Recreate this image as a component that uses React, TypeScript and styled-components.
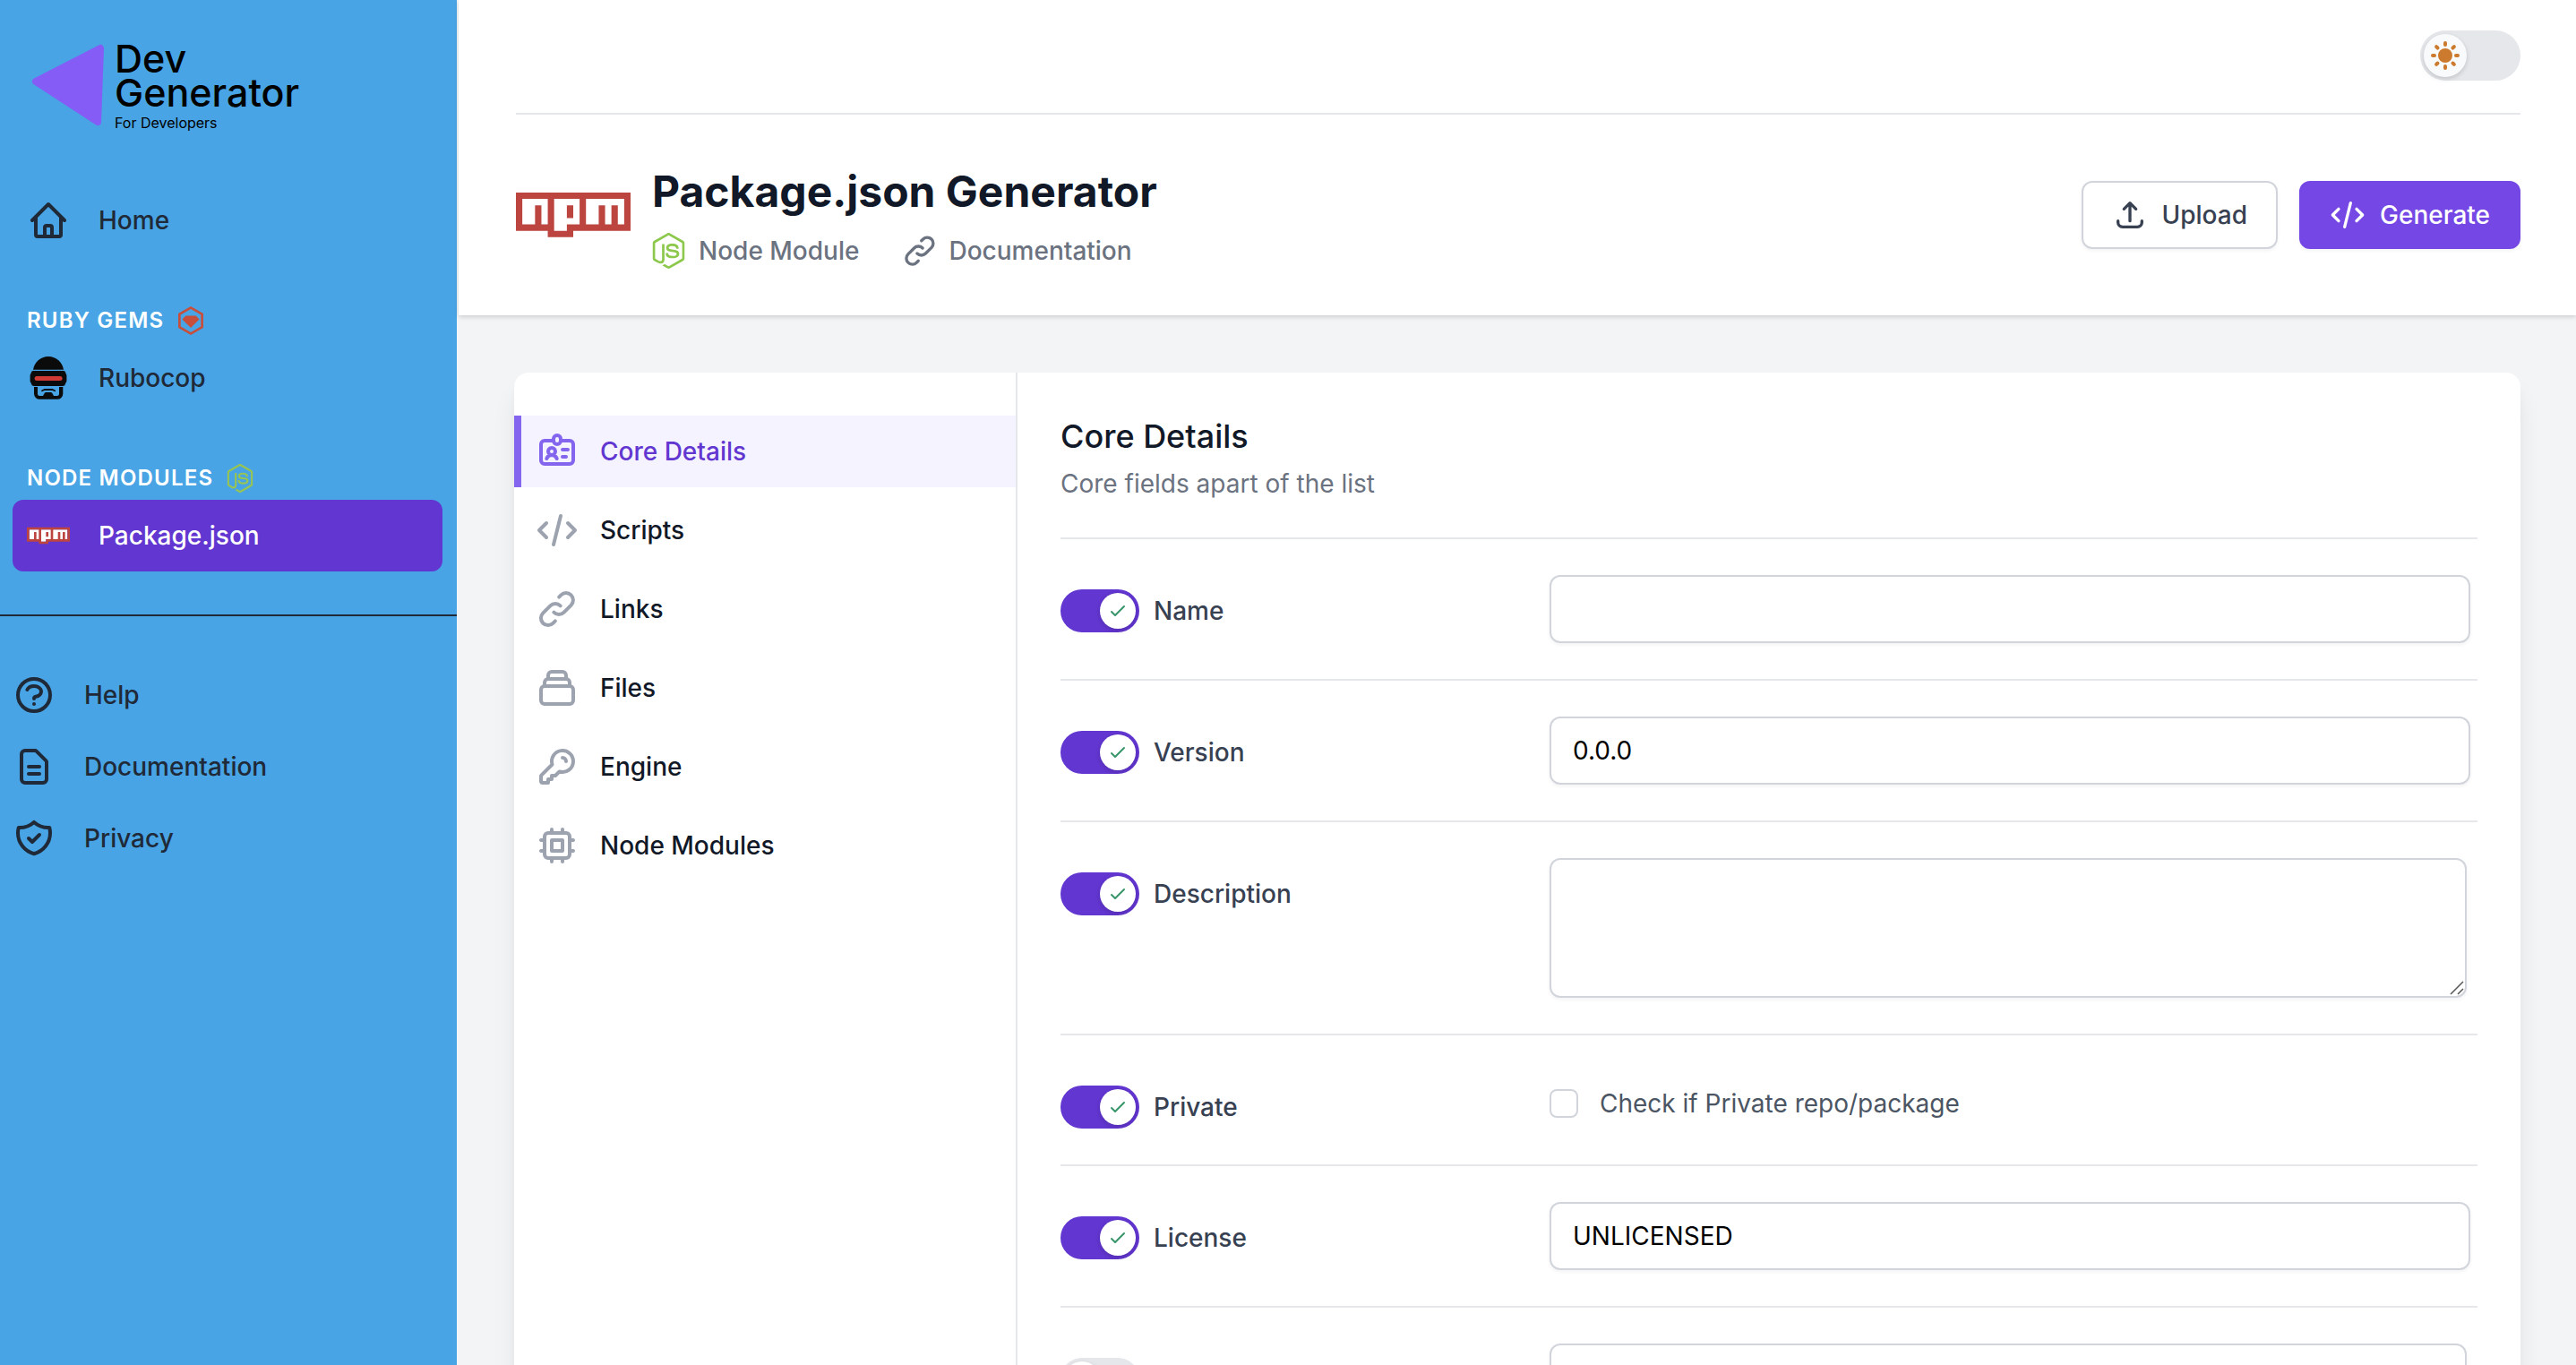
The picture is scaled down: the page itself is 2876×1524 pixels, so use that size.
import React, { useState } from 'react';
import styled, { createGlobalStyle, css } from 'styled-components';
import {
  HiOutlineHome,
  HiOutlineQuestionMarkCircle,
  HiOutlineDocumentText,
  HiOutlineShieldCheck,
  HiOutlineIdentification,
  HiOutlineCode,
  HiOutlineLink,
  HiOutlineCollection,
  HiOutlineKey,
  HiOutlineChip,
  HiOutlineUpload,
  HiOutlineCheck,
  HiSun,
} from 'react-icons/hi';
import { SiNodedotjs, SiRubygems } from 'react-icons/si';

const GlobalStyle = createGlobalStyle`
  *, *::before, *::after { box-sizing: border-box; }
  html, body { margin: 0; }
  body {
    background: #f3f4f6;
    color: #111827;
    font-family: Inter, "Liberation Sans", sans-serif;
    font-size: 28px;
    line-height: 40px;
  }
  h1, h2, p { margin: 0; }
  a { color: inherit; text-decoration: none; }
  button, input, textarea { font: inherit; color: inherit; margin: 0; }
`;

const Shell = styled.div`
  display: flex;
  height: 100vh;
  overflow: hidden;
`;

/* ---------- sidebar ---------- */

const Sidebar = styled.aside`
  flex: none;
  width: 510px;
  margin-right: 2px;
  background: #48a4e4;
  color: #1f2937;
`;

const Brand = styled.a`
  display: flex;
  align-items: flex-start;
  gap: 10px;
  height: 206px;
  padding: 46px 32px 0 34px;
`;

const BrandMark = styled.svg`
  flex: none;
  width: 84px;
  height: 96px;
`;

const BrandText = styled.span`
  display: flex;
  flex-direction: column;
  color: #000;
`;

const BrandName = styled.span`
  font-size: 43px;
  font-weight: 500;
  line-height: 38px;
`;

const BrandTag = styled.span`
  font-size: 16px;
  line-height: 30px;
`;

const NavGroup = styled.div`
  padding: 0 16px 0 14px;
  & + & { margin-top: 56px; }
`;

const GroupTitle = styled.h2`
  display: flex;
  align-items: center;
  gap: 14px;
  margin-bottom: 8px;
  padding-left: 16px;
  color: #fff;
  font-size: 24px;
  font-weight: 600;
  line-height: 32px;
  letter-spacing: 0.05em;
  text-transform: uppercase;
  svg { width: 32px; height: 32px; }
`;

const NavLink = styled.a<{ $active?: boolean; $flush?: boolean }>`
  display: flex;
  align-items: center;
  gap: 32px;
  height: 80px;
  padding: 0 16px;
  border-radius: 12px;
  font-weight: 500;
  > svg { flex: none; width: 48px; height: 48px; }
  ${(p) => p.$active && css`background: #6236d0; color: #fff;`}
  ${(p) => p.$flush && css`padding: 0;`}
`;

const HelpNav = styled.nav`
  margin-top: 48px;
  padding: 48px 16px 0 14px;
  border-top: 2px solid #1f2937;
`;

/* ---------- header ---------- */

const Content = styled.div`
  flex: 1;
  min-width: 0;
`;

const Header = styled.header`
  padding: 0 62px 0 64px;
  background: #fff;
  box-shadow: 0 2px 6px rgba(0, 0, 0, 0.1), 0 2px 4px rgba(0, 0, 0, 0.06);
`;

const TopBar = styled.div`
  display: flex;
  justify-content: flex-end;
  padding: 34px 0 36px;
  border-bottom: 2px solid #e5e7eb;
`;

const ThemeSwitch = styled.button`
  display: flex;
  width: 112px;
  height: 56px;
  padding: 4px;
  border: 0;
  border-radius: 28px;
  background: #e5e7eb;
`;

const ThemeKnob = styled.span`
  display: grid;
  place-items: center;
  width: 48px;
  height: 48px;
  border-radius: 50%;
  background: #f9fafb;
  color: #cc7a2e;
  box-shadow: 0 2px 6px rgba(0, 0, 0, 0.1), 0 2px 4px rgba(0, 0, 0, 0.06);
  svg { width: 40px; height: 40px; }
`;

const TitleBar = styled.div`
  display: flex;
  align-items: center;
  gap: 24px;
  padding: 48px 0;
`;

const LogoBox = styled.div`
  display: grid;
  place-items: center;
  width: 128px;
  height: 128px;
  svg { width: 128px; }
`;

const TitleBlock = styled.div`
  flex: 1;
  display: flex;
  flex-direction: column;
  gap: 8px;
`;

const PageTitle = styled.h1`
  font-size: 48px;
  font-weight: 700;
  line-height: 72px;
`;

const MetaRow = styled.div`
  display: flex;
  gap: 48px;
`;

const MetaLink = styled.a`
  display: flex;
  align-items: center;
  gap: 12px;
  height: 44px;
  color: #6b7280;
  font-weight: 500;
  svg { width: 40px; height: 40px; }
`;

const NodeMark = styled(SiNodedotjs)`
  && {
    width: 37px;
    margin-right: 3px;
  }
`;

const Button = styled.button<{ $primary?: boolean }>`
  display: flex;
  align-items: center;
  gap: 16px;
  height: 76px;
  padding: 0 32px;
  border: 2px solid ${(p) => (p.$primary ? '#7547e5' : '#d1d5db')};
  border-radius: 12px;
  background: ${(p) => (p.$primary ? '#7547e5' : '#fff')};
  color: ${(p) => (p.$primary ? '#fff' : '#374151')};
  font-weight: 500;
  box-shadow: 0 2px 4px rgba(0, 0, 0, 0.05);
  svg { width: 40px; height: 40px; }
`;

/* ---------- card ---------- */

const Main = styled.main`
  padding: 64px 62px;
`;

const CardShadow = styled.div`
  border-radius: 16px;
  box-shadow: 0 20px 30px -6px rgba(0, 0, 0, 0.1), 0 8px 12px -4px rgba(0, 0, 0, 0.05);
`;

const Card = styled.div`
  display: grid;
  grid-template-columns: 1fr 3fr;
  overflow: hidden;
  border-radius: 16px;
  background: #fff;
`;

const Tabs = styled.nav`
  display: flex;
  flex-direction: column;
  gap: 8px;
  padding: 48px 0;
`;

const Tab = styled.a<{ $active?: boolean }>`
  display: flex;
  align-items: center;
  gap: 24px;
  height: 80px;
  padding: 0 24px 0 16px;
  border-left: 8px solid ${(p) => (p.$active ? '#8466ee' : 'transparent')};
  background: ${(p) => (p.$active ? '#f5f3ff' : 'transparent')};
  color: ${(p) => (p.$active ? '#6236d0' : '#111827')};
  font-weight: 500;
  svg {
    width: 48px;
    height: 48px;
    color: ${(p) => (p.$active ? '#8466ee' : '#9ca3af')};
  }
`;

const Panel = styled.section`
  min-width: 0;
  padding: 48px;
  border-left: 2px solid #e5e7eb;
`;

const PanelTitle = styled.h2`
  font-size: 36px;
  font-weight: 500;
  line-height: 46px;
`;

const PanelNote = styled.p`
  margin: 10px 0 40px;
  color: #6b7280;
`;

const Row = styled.div`
  display: grid;
  grid-template-columns: repeat(3, 1fr);
  column-gap: 32px;
  align-items: start;
  padding: 40px 0;
  border-top: 2px solid #e5e7eb;
`;

const RowHead = styled.div`
  display: flex;
  align-items: center;
  gap: 16px;
  padding-top: 16px;
`;

const Switch = styled.button<{ $on: boolean }>`
  display: flex;
  justify-content: ${(p) => (p.$on ? 'flex-end' : 'flex-start')};
  width: 88px;
  height: 48px;
  padding: 4px;
  border: 0;
  border-radius: 24px;
  background: ${(p) => (p.$on ? '#6236d0' : '#e5e7eb')};
`;

const Knob = styled.span`
  display: grid;
  place-items: center;
  width: 40px;
  height: 40px;
  border-radius: 50%;
  background: #fff;
  color: #38966a;
  box-shadow: 0 2px 6px rgba(0, 0, 0, 0.1), 0 2px 4px rgba(0, 0, 0, 0.06);
  svg { width: 24px; height: 24px; }
`;

const Label = styled.label`
  color: #374151;
  font-weight: 500;
`;

const Field = styled.div`
  grid-column: span 2;
  padding: 0 8px;
`;

const box = css`
  display: block;
  width: 100%;
  padding: 16px 24px;
  border: 2px solid #d1d5db;
  border-radius: 12px;
  background: #fff;
  color: #000;
  box-shadow: 0 2px 4px rgba(0, 0, 0, 0.05);
`;

const TextInput = styled.input`
  ${box}
  height: 76px;
`;

const AreaWrap = styled.div`
  position: relative;
  margin-right: 4px;
`;

const TextArea = styled.textarea`
  ${box}
  height: 156px;
  resize: none;
`;

const Grip = styled.svg`
  position: absolute;
  right: 3px;
  bottom: 3px;
  width: 16px;
  height: 16px;
  pointer-events: none;
`;

const CheckLine = styled.div`
  display: flex;
  align-items: center;
  gap: 24px;
  padding: 16px 0 8px;
  color: #4b5563;
`;

const CheckBox = styled.input`
  appearance: none;
  width: 32px;
  height: 32px;
  border: 2px solid #d1d5db;
  border-radius: 8px;
  background: #fff;
`;

/* ---------- drawings ---------- */

const NpmLogo = () => (
  <svg viewBox="0 0 18 7" aria-hidden="true">
    <path fill="#fff" d="M1 1h16v4H8v1H6V5H1z" />
    <path
      fill="#bc453f"
      fillRule="evenodd"
      d="M0 0h18v6H9v1H5V6H0zM1 5h2V2h1v3h1V1H1zM6 1v5h2V5h2V1zM8 2h1v2H8zM11 1v4h2V2h1v3h1V2h1v3h1V1z"
    />
  </svg>
);

const RubocopIcon = () => (
  <svg viewBox="0 0 48 48" aria-hidden="true">
    {/* dome */}
    <path fill="#0b0b0b" d="M7 14.8C8.2 6.400 15.300 0 24 0s15.800 6.400 17 14.800z" />
    {/* visor */}
    <path
      fill="#0b0b0b"
      d="M7 16h34a2 2 0 0 1 2 1.600c.2 1.400 1.400 2.400 1.400 3.600v6c0 1.400-1.200 2-1.400 3.400a2.600 2.600 0 0 1-2.600 2.400H7.600A2.600 2.600 0 0 1 5 30.600c-.2-1.400-1.400-2-1.400-3.400v-6c0-1.200 1.200-2.200 1.400-3.600A2 2 0 0 1 7 16z"
    />
    <rect x="8.600" y="22" width="31" height="5" rx="2.500" fill="#cf3a34" />
    {/* jaw */}
    <path
      fill="#0b0b0b"
      d="M8 34h4v7.500a2.500 2.500 0 0 0 2.500 2.500H18l1.800-3.200a1.800 1.800 0 0 1 1.600-.8h5.200a1.800 1.800 0 0 1 1.600.8L30 44h3.500a2.500 2.500 0 0 0 2.500-2.500V34h4.300v7.500a6.300 6.300 0 0 1-6.300 6.300H14.300A6.300 6.300 0 0 1 8 41.500z"
    />
    {/* mouth */}
    <path
      d="M17 38.200l2.600-1.200h9l2.600 1.200"
      fill="none"
      stroke="#0b0b0b"
      strokeWidth="1.800"
      strokeLinecap="round"
      strokeLinejoin="round"
    />
  </svg>
);

/* ---------- data ---------- */

const tabs = [
  { name: 'Core Details', Icon: HiOutlineIdentification },
  { name: 'Scripts', Icon: HiOutlineCode },
  { name: 'Links', Icon: HiOutlineLink },
  { name: 'Files', Icon: HiOutlineCollection },
  { name: 'Engine', Icon: HiOutlineKey },
  { name: 'Node Modules', Icon: HiOutlineChip },
];

const helpLinks = [
  { name: 'Help', Icon: HiOutlineQuestionMarkCircle },
  { name: 'Documentation', Icon: HiOutlineDocumentText },
  { name: 'Privacy', Icon: HiOutlineShieldCheck },
];

type FieldDef = {
  id: string;
  label?: string;
  kind: 'text' | 'area' | 'check';
  value?: string;
  on: boolean;
};

const fields: FieldDef[] = [
  { id: 'name', label: 'Name', kind: 'text', value: '', on: true },
  { id: 'version', label: 'Version', kind: 'text', value: '0.0.0', on: true },
  { id: 'description', label: 'Description', kind: 'area', on: true },
  { id: 'private', label: 'Private', kind: 'check', on: true },
  { id: 'license', label: 'License', kind: 'text', value: 'UNLICENSED', on: true },
  { id: 'keywords', kind: 'area', on: false },
];

function FieldRow({ id, label, kind, value, on }: FieldDef) {
  const [enabled, setEnabled] = useState(on);
  return (
    <Row>
      <RowHead>
        <Switch
          type="button"
          role="switch"
          aria-checked={enabled}
          aria-label={`Include ${id}`}
          $on={enabled}
          onClick={() => setEnabled(!enabled)}
        >
          <Knob>{enabled && <HiOutlineCheck />}</Knob>
        </Switch>
        {label && <Label htmlFor={id}>{label}</Label>}
      </RowHead>
      <Field>
        {kind === 'text' && <TextInput id={id} type="text" defaultValue={value} />}
        {kind === 'area' && (
          <AreaWrap>
            <TextArea id={id} aria-label={label ? undefined : id} />
            <Grip viewBox="0 0 16 16" aria-hidden="true">
              <path d="M1 15L15 1M9 15l6-6" stroke="#555" strokeWidth="1.500" fill="none" />
            </Grip>
          </AreaWrap>
        )}
        {kind === 'check' && (
          <CheckLine>
            <CheckBox id={id} type="checkbox" />
            <label htmlFor={id}>Check if Private repo/package</label>
          </CheckLine>
        )}
      </Field>
    </Row>
  );
}

export default function App() {
  return (
    <>
      <GlobalStyle />
      <Shell>
        <Sidebar>
          <Brand href="#">
            <BrandMark viewBox="34 46 84 96" aria-hidden="true">
              <path
                d="M40 91L112 54L109 136Z"
                fill="#855cf5"
                stroke="#855cf5"
                strokeWidth="8"
                strokeLinejoin="round"
              />
            </BrandMark>
            <BrandText>
              <BrandName>
                Dev
                <br />
                Generator
              </BrandName>
              <BrandTag>For Developers</BrandTag>
            </BrandText>
          </Brand>
          <nav>
            <NavGroup>
              <NavLink href="#">
                <HiOutlineHome />
                Home
              </NavLink>
            </NavGroup>
            <NavGroup>
              <GroupTitle>
                Ruby Gems
                <SiRubygems color="#c84e3c" />
              </GroupTitle>
              <NavLink href="#">
                <RubocopIcon />
                Rubocop
              </NavLink>
            </NavGroup>
            <NavGroup>
              <GroupTitle>
                Node Modules
                <SiNodedotjs color="#97c453" />
              </GroupTitle>
              <NavLink href="#" $active>
                <NpmLogo />
                Package.json
              </NavLink>
            </NavGroup>
          </nav>
          <HelpNav>
            {helpLinks.map(({ name, Icon }) => (
              <NavLink key={name} href="#" $flush>
                <Icon />
                {name}
              </NavLink>
            ))}
          </HelpNav>
        </Sidebar>

        <Content>
          <Header>
            <TopBar>
              <ThemeSwitch type="button" role="switch" aria-checked={false} aria-label="Dark mode">
                <ThemeKnob>
                  <HiSun />
                </ThemeKnob>
              </ThemeSwitch>
            </TopBar>
            <TitleBar>
              <LogoBox>
                <NpmLogo />
              </LogoBox>
              <TitleBlock>
                <PageTitle>Package.json Generator</PageTitle>
                <MetaRow>
                  <MetaLink href="#">
                    <NodeMark viewBox="1 0 22 24" color="#8cc84b" />
                    Node Module
                  </MetaLink>
                  <MetaLink href="#">
                    <HiOutlineLink />
                    Documentation
                  </MetaLink>
                </MetaRow>
              </TitleBlock>
              <Button type="button">
                <HiOutlineUpload />
                Upload
              </Button>
              <Button type="button" $primary>
                <HiOutlineCode />
                Generate
              </Button>
            </TitleBar>
          </Header>

          <Main>
            <CardShadow>
              <Card>
                <Tabs>
                  {tabs.map(({ name, Icon }, i) => (
                    <Tab key={name} href="#" $active={i === 0}>
                      <Icon />
                      {name}
                    </Tab>
                  ))}
                </Tabs>
                <Panel>
                  <PanelTitle>Core Details</PanelTitle>
                  <PanelNote>Core fields apart of the list</PanelNote>
                  {fields.map((f) => (
                    <FieldRow key={f.id} {...f} />
                  ))}
                </Panel>
              </Card>
            </CardShadow>
          </Main>
        </Content>
      </Shell>
    </>
  );
}
